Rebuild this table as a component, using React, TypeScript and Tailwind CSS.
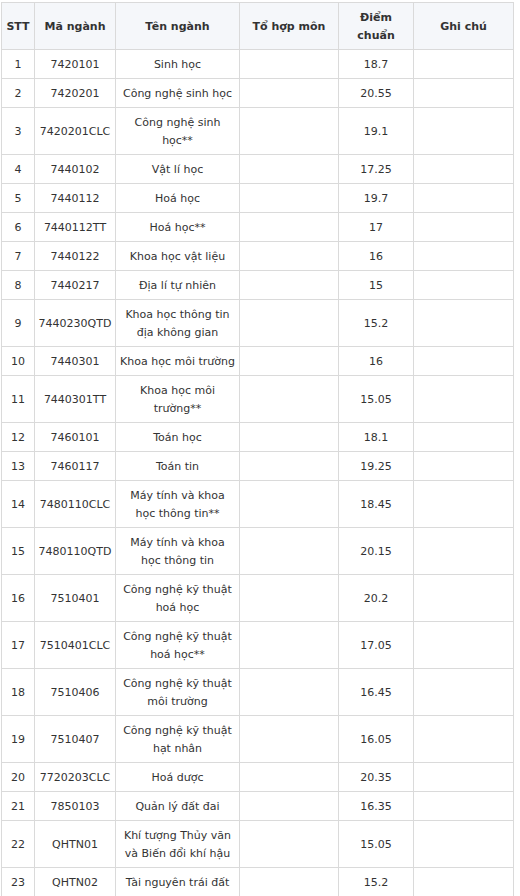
import React from "react";

interface Row {
    stt: number;
    code: string;
    name: string[];
    score: string;
}

const rows: Row[] = [
    { stt: 1, code: "7420101", name: ["Sinh học"], score: "18.7" },
    { stt: 2, code: "7420201", name: ["Công nghệ sinh học"], score: "20.55" },
    { stt: 3, code: "7420201CLC", name: ["Công nghệ sinh", "học**"], score: "19.1" },
    { stt: 4, code: "7440102", name: ["Vật lí học"], score: "17.25" },
    { stt: 5, code: "7440112", name: ["Hoá học"], score: "19.7" },
    { stt: 6, code: "7440112TT", name: ["Hoá học**"], score: "17" },
    { stt: 7, code: "7440122", name: ["Khoa học vật liệu"], score: "16" },
    { stt: 8, code: "7440217", name: ["Địa lí tự nhiên"], score: "15" },
    { stt: 9, code: "7440230QTD", name: ["Khoa học thông tin", "địa không gian"], score: "15.2" },
    { stt: 10, code: "7440301", name: ["Khoa học môi trường"], score: "16" },
    { stt: 11, code: "7440301TT", name: ["Khoa học môi", "trường**"], score: "15.05" },
    { stt: 12, code: "7460101", name: ["Toán học"], score: "18.1" },
    { stt: 13, code: "7460117", name: ["Toán tin"], score: "19.25" },
    { stt: 14, code: "7480110CLC", name: ["Máy tính và khoa", "học thông tin**"], score: "18.45" },
    { stt: 15, code: "7480110QTD", name: ["Máy tính và khoa", "học thông tin"], score: "20.15" },
    { stt: 16, code: "7510401", name: ["Công nghệ kỹ thuật", "hoá học"], score: "20.2" },
    { stt: 17, code: "7510401CLC", name: ["Công nghệ kỹ thuật", "hoá học**"], score: "17.05" },
    { stt: 18, code: "7510406", name: ["Công nghệ kỹ thuật", "môi trường"], score: "16.45" },
    { stt: 19, code: "7510407", name: ["Công nghệ kỹ thuật", "hạt nhân"], score: "16.05" },
    { stt: 20, code: "7720203CLC", name: ["Hoá dược"], score: "20.35" },
    { stt: 21, code: "7850103", name: ["Quản lý đất đai"], score: "16.35" },
    { stt: 22, code: "QHTN01", name: ["Khí tượng Thủy văn", "và Biến đổi khí hậu"], score: "15.05" },
    { stt: 23, code: "QHTN02", name: ["Tài nguyên trái đất"], score: "15.2" },
];

const cell = "border border-[#dadada] px-[2px] pt-[6px] pb-[4px] text-center align-middle whitespace-nowrap";

export default function App() {
    return (
        <div className="bg-white h-[896px] overflow-hidden pt-[2px] pl-[1px] font-['DejaVu_Sans',sans-serif] text-[11px] leading-[18px] text-[#333]">
            <table className="w-[512px] table-fixed border-collapse">
                <colgroup>
                    <col className="w-[33px]" />
                    <col className="w-[81px]" />
                    <col className="w-[124px]" />
                    <col className="w-[99px]" />
                    <col className="w-[75px]" />
                    <col className="w-[100px]" />
                </colgroup>
                <thead>
                    <tr className="bg-[#f5f7fa] font-bold">
                        <th className={cell}>STT</th>
                        <th className={cell}>Mã ngành</th>
                        <th className={cell}>Tên ngành</th>
                        <th className={cell}>Tổ hợp môn</th>
                        <th className={cell}>
                            Điểm
                            <br />
                            chuẩn
                        </th>
                        <th className={cell}>Ghi chú</th>
                    </tr>
                </thead>
                <tbody>
                    {rows.map((r) => (
                        <tr key={r.stt}>
                            <td className={cell}>{r.stt}</td>
                            <td className={cell}>{r.code}</td>
                            <td className={cell}>
                                {r.name.map((line, i) => (
                                    <React.Fragment key={i}>
                                        {i > 0 && <br />}
                                        {line}
                                    </React.Fragment>
                                ))}
                            </td>
                            <td className={cell}></td>
                            <td className={cell}>{r.score}</td>
                            <td className={cell}></td>
                        </tr>
                    ))}
                </tbody>
            </table>
        </div>
    );
}
